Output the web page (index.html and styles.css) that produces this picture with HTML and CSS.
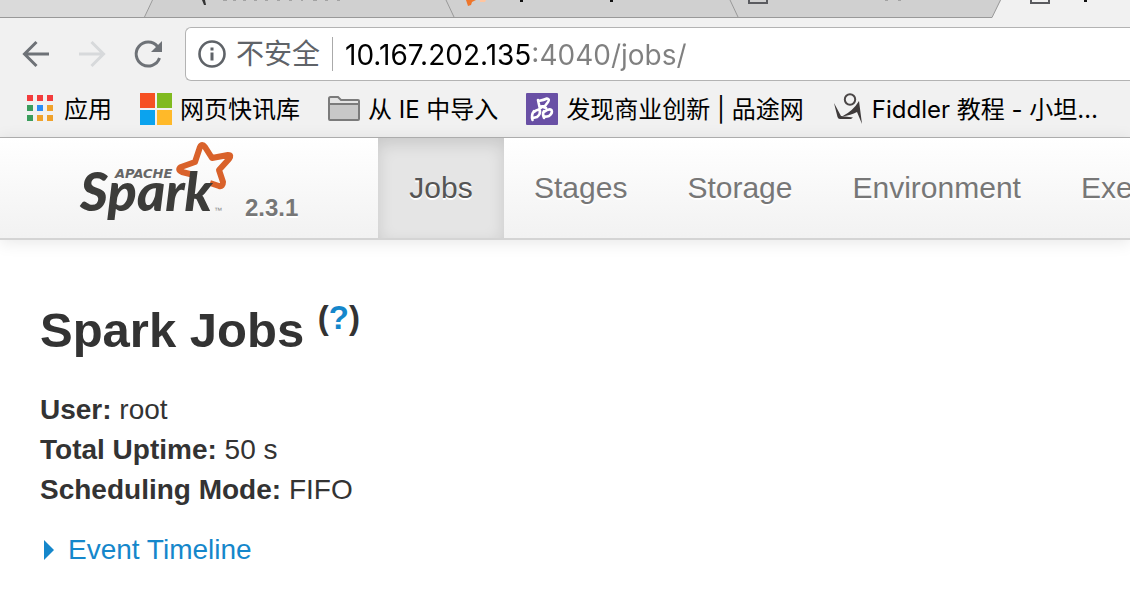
FILE: index.html
```html
<!DOCTYPE html>
<html lang="zh-CN">
<head>
<meta charset="utf-8">
<title>Spark Jobs</title>
<link rel="stylesheet" href="styles.css">
</head>
<body>
<div class="chrome">
  <svg class="tabs" width="1130" height="18" viewBox="0 0 1130 18" aria-hidden="true">
    <path d="M0 0H1001L992 17.5H0Z" fill="#d0d0d0"/>
    <path d="M0 0H153L145 17H0Z" fill="#dadada"/>
    <path d="M0 17.5H992L1000.500 0M152.500 0L144.500 17M446 0L454 17M730 0L738 17" fill="none" stroke="#999" stroke-width="1"/>
    <path d="M202 0H205L206 5H204Z" fill="#333"/>
    <path d="M223 0h4M233 0h3M243 0h3M254 0h3M265 0h3M277 0h3M289 0h3M301 0h2M313 0h4M325 0h3M337 0h3M885 0h3M898 0h3" stroke="#777" stroke-width="1"/>
    <path d="M466 0H476L472 2L471 5L468 6Z" fill="#ee762b"/>
    <path d="M480 0H486L485 2H480Z" fill="#ffc5a0"/>
    <path d="M520 0h3v2h-3zM610 0h3v2h-3zM1084 0h3v2h-3z" fill="#111"/>
    <path d="M749 0V3H767V0M1031 0V3H1049V0" fill="none" stroke="#5a5b5f" stroke-width="2"/>
  </svg>
  <div class="toolbar">
    <button class="tool" type="button" aria-label="后退"><svg width="32" height="32" viewBox="0 0 32 32"><path d="M29 16H5M16.500 4L4.500 16L16.500 28" fill="none" stroke="#6e7277" stroke-width="3"/></svg></button>
    <button class="tool" type="button" aria-label="前进" disabled><svg width="32" height="32" viewBox="0 0 32 32"><path d="M3 16H27M15.500 4L27.500 16L15.500 28" fill="none" stroke="#d7d9db" stroke-width="3"/></svg></button>
    <button class="tool" type="button" aria-label="重新加载"><svg width="32" height="32" viewBox="0 0 32 32"><path d="M25.500 8.500A12 12 0 1 0 27.500 20" fill="none" stroke="#6e7277" stroke-width="3"/><path d="M30 3V14H19Z" fill="#6e7277"/></svg></button>
    <div class="omnibox">
      <svg class="info" width="28" height="28" viewBox="0 0 28 28" aria-hidden="true"><circle cx="14" cy="14" r="12.500" fill="none" stroke="#5f6368" stroke-width="2.600"/><path d="M14 7.500v3M14 12.500v8" stroke="#5f6368" stroke-width="3"/></svg>
      <label class="insecure" for="url">不安全</label>
      <input class="url" id="url" type="text" value="10.167.202.135:4040/jobs/" spellcheck="false">
    </div>
  </div>
  <nav class="bookmarks" aria-label="书签">
    <a href="#"><svg width="32" height="32" viewBox="0 0 32 32"><path d="M3 2h6v6H3zM13 2h6v6h-6zM23 2h6v6h-6z" fill="#f33c3c"/><path d="M3 12h6v6H3zM3 22h6v6H3z" fill="#3a9d5c"/><path d="M13 12h6v6h-6z" fill="#2b8cf5"/><path d="M23 12h6v6h-6zM13 22h6v6h-6zM23 22h6v6h-6z" fill="#f0a22b"/></svg><span>应用</span></a>
    <a href="#"><svg width="32" height="32" viewBox="0 0 32 32"><path d="M0 0h15v15H0z" fill="#f65022"/><path d="M17 0h15v15H17z" fill="#80ba20"/><path d="M0 17h15v15H0z" fill="#0ba3ee"/><path d="M17 17h15v15H17z" fill="#ffb929"/></svg><span>网页快讯库</span></a>
    <a href="#"><svg width="32" height="32" viewBox="0 0 32 32"><path d="M1 26V5.500Q1 4 2.500 4H10L13 7H30Q31 7 31 8V26Q31 27 30 27H2Q1 27 1 26Z" fill="#e4e4e4" stroke="#7b7b7b" stroke-width="2"/><path d="M2 12H30V26H2Z" fill="#c8c8c8"/><path d="M1 11H31" stroke="#7b7b7b" stroke-width="2"/></svg><span>从 IE 中导入</span></a>
    <a href="#"><svg width="32" height="32" viewBox="0 0 32 32"><rect width="32" height="32" rx="1" fill="#6950a5"/><g fill="none" stroke="#fff" stroke-width="2.600" stroke-linecap="round" stroke-linejoin="round"><path d="M12 7L13.500 14M12.500 8Q18 7 21 5.500Q24 6 22 9L19 13L14 13.500"/><path d="M8 18Q5 22 6.500 27M8 19Q13 15 14 18Q14.500 21 11 24L7 25M16 14L12 17"/><path d="M18 18Q16 21 18 25M18 19Q23 15 25.500 17Q27 20 23 23Q20 24 18 23.500M17 14L20 15"/></g></svg><span>发现商业创新 | 品途网</span></a>
    <a href="#"><svg width="32" height="32" viewBox="0 0 32 32"><circle cx="18" cy="6.500" r="5.200" fill="none" stroke="#4b4747" stroke-width="2"/><path d="M2 10L9 23L21 24.500L19 26L8 26Q6 26 5.500 24ZM10 23.500Q21 18 27 8L30 31L25 19Q19 22 10 23.500Z" fill="#3f3b3b"/></svg><span>Fiddler 教程 - 小坦…</span></a>
  </nav>
</div>
<header class="navbar">
  <a class="brand" href="#" aria-label="Apache Spark 2.3.1">
    <svg class="logo" width="156" height="84" viewBox="0 0 156 84">
      <path d="M114 37L102 34Q97 32 101 29L115 24L120 9Q122 5 125 9L132 20L148 17Q152 17 149 21L139 32L143 44Q143 49 139 48L130 45" fill="none" stroke="#d9622b" stroke-width="6" stroke-linejoin="round"/>
      <text class="wordmark" x="0" y="73">Spark</text>
      <text class="apache" x="35" y="40">APACHE</text>
      <text class="tm" x="134" y="75">™</text>
    </svg>
    <span class="version">2.3.1</span>
  </a>
  <nav class="links" aria-label="Spark">
    <a class="active" href="#" aria-current="page">Jobs</a>
    <a href="#">Stages</a>
    <a href="#">Storage</a>
    <a href="#">Environment</a>
    <a href="#">Executors</a>
  </nav>
</header>
<main class="content">
  <h1>Spark Jobs <sup>(<a href="#">?</a>)</sup></h1>
  <ul class="summary">
    <li><strong>User:</strong> root</li>
    <li><strong>Total Uptime:</strong> 50 s</li>
    <li><strong>Scheduling Mode:</strong> FIFO</li>
  </ul>
  <a class="timeline" href="#"><svg width="10" height="20" viewBox="0 0 10 20" aria-hidden="true"><path d="M0 0L10 10L0 20Z" fill="#1587cb"/></svg>Event Timeline</a>
</main>
</body>
</html>
```
FILE: styles.css
```css
* { box-sizing: border-box; }
body {
  margin: 0;
  background: #fff;
  color: #333;
  font: 28px/40px "Liberation Sans", Arial, sans-serif;
}
a { color: #1587cb; text-decoration: none; }
svg { display: block; flex: none; }

.chrome {
  background: #f1f1f1;
  border-bottom: 1px solid #b3b3b3;
  overflow: hidden;
  color: #000;
  font-family: Inter, "Noto Sans CJK SC", sans-serif;
}
.toolbar {
  display: flex;
  align-items: center;
  gap: 24px;
  padding: 9px 0 0 20px;
}
.tool { padding: 0; border: 0; background: none; }
.omnibox {
  flex: 1;
  display: flex;
  align-items: center;
  height: 54px;
  margin-left: -3px;
  padding-left: 12px;
  background: #fff;
  border: 1px solid #b3b3b3;
  border-right: 0;
  border-radius: 6px 0 0 6px;
}
.insecure {
  margin-left: 10px;
  padding-right: 12px;
  border-right: 1px solid #aaa;
  color: #5f6368;
  line-height: 34px;
  white-space: nowrap;
}
.url {
  flex: 1;
  min-width: 0;
  padding: 2px 0 0 12px;
  border: 0;
  outline: 0;
  font: 28px/40px Inter, sans-serif;
  color: transparent;
  background: linear-gradient(to right, #000 199px, #808080 199px);
  -webkit-background-clip: text;
  background-clip: text;
}
.bookmarks {
  display: flex;
  gap: 28px;
  padding: 8px 0 8px 24px;
  font-size: 24px;
}
.bookmarks a {
  display: flex;
  align-items: center;
  gap: 8px;
  color: #000;
  white-space: nowrap;
}
.bookmarks span {
  padding-top: 2px;
  line-height: 38px;
}

.navbar {
  display: flex;
  border-bottom: 2px solid #d4d4d4;
  background: linear-gradient(#fff, #f2f2f2);
  box-shadow: 0 2px 16px rgba(0, 0, 0, 0.1);
}
.brand {
  display: flex;
  flex: none;
  width: 378px;
  padding-left: 80px;
  color: #777;
}
.logo { overflow: visible; }
.wordmark { font: italic 900 54px Lato, sans-serif; fill: #3c3c3a; }
.apache { font: italic bold 13px "DejaVu Sans", sans-serif; fill: #666; }
.tm { font: 8px "Liberation Sans", sans-serif; fill: #888; }
.version {
  padding: 50px 0 10px 9px;
  font-size: 24px;
  font-weight: bold;
  text-shadow: 0 2px 0 #fff;
}
.links {
  display: flex;
  flex: 1;
  min-width: 0;
  overflow: hidden;
  white-space: nowrap;
}
.links a {
  flex: none;
  min-width: 126px;
  padding: 30px 30px;
  color: #777;
  font-size: 30px;
  text-align: center;
  text-shadow: 0 2px 0 #fff;
}
.links .active {
  color: #555;
  background: #e5e5e5;
  box-shadow: inset 0 6px 16px rgba(0, 0, 0, 0.125);
}

.content { padding: 50px 40px 40px; }
h1 {
  margin: 0 0 20px;
  font-size: 49px;
  line-height: 80px;
}
sup {
  position: relative;
  top: -18px;
  font-size: 33px;
  line-height: 0;
  vertical-align: baseline;
}
.summary { margin: 0 0 20px; padding: 0; list-style: none; }
.timeline {
  display: inline-flex;
  align-items: center;
  gap: 14px;
  padding-left: 4px;
}
```
